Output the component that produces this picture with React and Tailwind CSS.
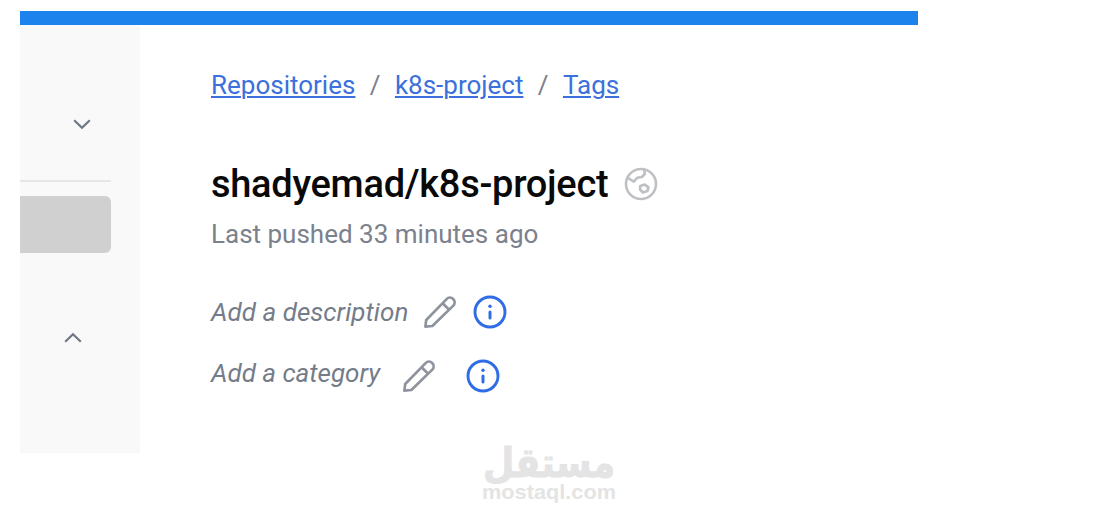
import React from "react";

const crumbs = ["Repositories", "k8s-project", "Tags"];

const Chevron = ({ up }) => (
  <svg width="20" height="12" viewBox="0 0 20 12" fill="none">
    <path
      d={up ? "M2.2 9.8 10 2.2l7.8 7.6" : "M2.2 2.2 10 9.8l7.8-7.6"}
      stroke="#6f7787"
      strokeWidth="2.2"
    />
  </svg>
);

const GlobeIcon = () => (
  <svg width="34" height="34" viewBox="0 0 34 34" fill="none">
    <g stroke="#bfc0c3" strokeWidth="2.6" strokeLinejoin="round">
      <circle cx="17" cy="17" r="15" />
      <path d="M4 11l5.8 3.6 3.4-3.8 4.6-.8 3-3-.6-4.4" />
      <path d="M16.2 19l4.6-1.4 3.6 2.8-.9 3.7-4.6 1.4-2.8-3z" />
    </g>
  </svg>
);

const PencilIcon = () => (
  <svg width="34" height="34" viewBox="0 0 34 34" fill="none">
    <g stroke="#8e939e" strokeWidth="2.7" strokeLinejoin="round">
      <path d="M2.4 31.6l.8-6.6L23.6 4.1a4.6 4.6 0 0 1 6.7 6.5L9.4 31z" />
      <path d="M19.6 8.2l6.5 6.5" />
    </g>
  </svg>
);

const InfoIcon = () => (
  <svg width="34" height="34" viewBox="0 0 34 34" fill="none">
    <circle cx="17" cy="17" r="15" stroke="#2f6ce5" strokeWidth="2.9" />
    <circle cx="17" cy="11.2" r="1.7" fill="#2f6ce5" />
    <path
      d="M17 17v6"
      stroke="#2f6ce5"
      strokeWidth="3"
      strokeLinecap="round"
    />
  </svg>
);

const Sidebar = () => (
  <aside className="h-[428px] w-[120px] bg-[#f9f9f9]">
    <div className="mr-[29px] flex h-[157px] items-start border-b-2 border-[#e6e6e6] pl-[52px] pt-[93px]">
      <Chevron />
    </div>
    <div className="mt-[14px] h-[57px] w-[91px] rounded-r-md bg-[#d0d0d0]" />
    <div className="pl-[43px] pt-[79px]">
      <Chevron up />
    </div>
  </aside>
);

const Watermark = () => (
  <svg
    className="absolute left-[470px] top-[414px]"
    width="158"
    height="100"
    viewBox="0 0 158 100"
    fill="#e4e4e4"
  >
    <text
      x="79"
      y="63"
      textAnchor="middle"
      direction="rtl"
      textLength="132"
      lengthAdjust="spacingAndGlyphs"
      stroke="#e4e4e4"
      className="font-['DejaVu_Sans',sans-serif] text-[41px] font-bold"
    >
      مستقل
    </text>
    <text
      x="12"
      y="85"
      textLength="134"
      lengthAdjust="spacingAndGlyphs"
      className="font-['Liberation_Sans',sans-serif] text-[21px] font-bold"
    >
      mostaql.com
    </text>
  </svg>
);

const App = () => {
  return (
    <div className="relative h-[514px] w-[1098px] overflow-hidden bg-white pl-5 pt-[11px] font-['Roboto',sans-serif]">
      <div className="h-[14px] w-[898px] bg-[#1c83ed]" />
      <div className="flex">
        <Sidebar />
        <main className="pl-[71px] pt-[44px]">
          <nav className="flex h-8 items-center text-[26px] leading-8 text-[#7b808a]">
            {crumbs.map((crumb, i) => (
              <React.Fragment key={crumb}>
                {i > 0 && <span className="w-[39.5px] text-center">/</span>}
                <a
                  href="#"
                  className="text-[#3b70dd] underline decoration-2 underline-offset-2"
                >
                  {crumb}
                </a>
              </React.Fragment>
            ))}
          </nav>
          <div className="mt-[59px] flex h-12 items-center gap-4">
            <h1 className="text-[38px] font-medium leading-[48px] tracking-[-0.28px] text-[#090909]">
              shadyemad/k8s-project
            </h1>
            <GlobeIcon />
          </div>
          <p className="mt-[10px] text-[26px] leading-8 text-[#7b818d]">
            Last pushed 33 minutes ago
          </p>
          <div className="mt-[45px] flex h-[34px] items-center text-[26px] italic text-[#757c89]">
            <span className="w-[212px] tracking-[0.04px]">
              Add a description
            </span>
            <PencilIcon />
            <span className="ml-4">
              <InfoIcon />
            </span>
          </div>
          <div className="mt-[30px] flex h-[34px] items-center text-[26px] italic text-[#757c89]">
            <span className="-mt-1.5 w-[191px]">Add a category</span>
            <PencilIcon />
            <span className="ml-[30px]">
              <InfoIcon />
            </span>
          </div>
        </main>
      </div>
      <Watermark />
    </div>
  );
};

export default App;
